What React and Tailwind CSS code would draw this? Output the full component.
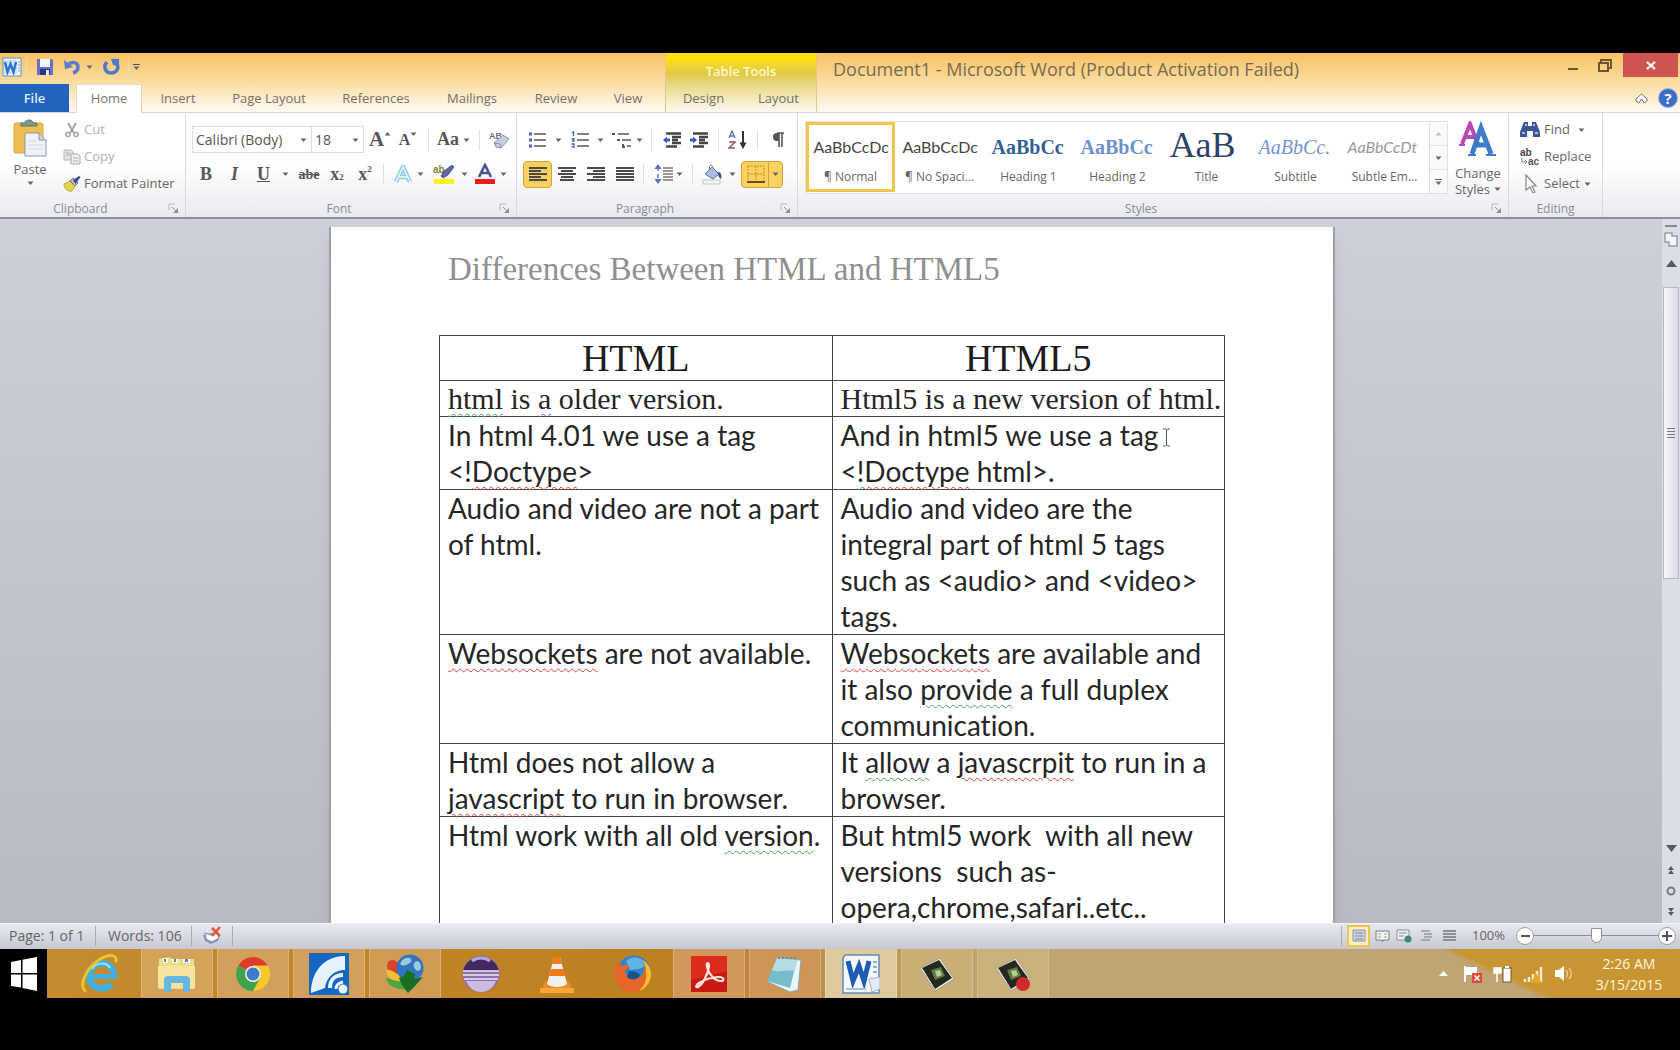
import React from "react";

const ui = "font-['Open_Sans','Noto_Sans',sans-serif]";

function Caret({ className = "" }) {
  return (
    <svg width="7" height="4" viewBox="0 0 7 4" className={`shrink-0 ${className}`} aria-hidden="true">
      <path d="M0.5 0.5h6L3.5 4z" fill="#666" />
    </svg>
  );
}

function Svg({ w = 20, h = 20, box, children }) {
  return (
    <svg width={w} height={h} viewBox={box || `0 0 ${w} ${h}`} fill="none" className="shrink-0" aria-hidden="true">
      {children}
    </svg>
  );
}

function Sep({ className = "mx-1", tone = "bg-[#dfe0e4]" }) {
  return <div className={`h-5 w-px shrink-0 ${tone} ${className}`} />;
}

function Btn({ label, className = "", children }) {
  return (
    <button type="button" aria-label={label} title={label} className={`flex shrink-0 items-center justify-center ${className}`}>
      {children}
    </button>
  );
}

/* ---------- title bar icons ---------- */

const WordBadge = () => (
  <Svg w={20} h={20}>
    <rect x="1" y="1" width="18" height="18" fill="#f3f8fe" stroke="#5a91cc" />
    <rect x="2" y="3" width="13" height="14" fill="#cfe3f7" />
    <path d="M3 5l2.500 10 3-8 3 8L14 5" stroke="#2b74c8" strokeWidth="2.400" />
    <path d="M16 5h2M16 8h2M16 11h2M16 14h2" stroke="#6ea3dc" />
  </Svg>
);
const SaveIcon = () => (
  <Svg w={18} h={18}>
    <path d="M1 1h15l1 1v15H1z" fill="#6a6fc6" />
    <rect x="4" y="1" width="10" height="8" fill="#f4f4fb" />
    <rect x="4" y="11" width="10" height="6" fill="#2c3484" />
    <rect x="10" y="12" width="3" height="5" fill="#e6e8f6" />
  </Svg>
);
const UndoIcon = () => (
  <Svg w={17} h={16}>
    <path d="M3 6c5-4 11-3 11 2 0 3-2 5-5 6" stroke="#5a7ad2" strokeWidth="3.500" />
    <path d="M0 1l1 9 8-2z" fill="#5a7ad2" />
  </Svg>
);
const RedoIcon = () => (
  <Svg w={17} h={16}>
    <path d="M4 3c-4 4-2 11 4 11s9-6 5-10" stroke="#4c78d0" strokeWidth="3.500" />
    <path d="M8 0h8v7l-6-1z" fill="#4c78d0" />
  </Svg>
);

/* ---------- clipboard icons ---------- */

const PasteIcon = () => (
  <Svg w={34} h={38}>
    <rect x="1" y="4" width="29" height="30" rx="2" fill="#f0bd55" stroke="#d9a43e" />
    <path d="M8 7V4h4c0-4 8-4 8 0h4v3z" fill="#7d9c8c" stroke="#5b7a6c" />
    <path d="M12 14h14l7 7v16H12z" fill="#eef1f8" stroke="#8f96ad" />
    <path d="M26 14v7h7" fill="#c9d0e2" stroke="#8f96ad" />
    <path d="M15 22h9M15 26h15M15 30h15" stroke="#d3d9e8" />
  </Svg>
);
const CutIcon = () => (
  <Svg w={16} h={16}>
    <path d="M4 1l6 10M12 1L6 11" stroke="#a4a4aa" strokeWidth="2" />
    <circle cx="4" cy="12.5" r="2" stroke="#a4a4aa" strokeWidth="1.6" />
    <circle cx="12" cy="12.5" r="2" stroke="#a4a4aa" strokeWidth="1.6" />
  </Svg>
);
const CopyIcon = () => (
  <Svg w={18} h={16}>
    <path d="M1 1h7l2 2v8H1z" fill="#e3e3e6" stroke="#b7b7bc" />
    <path d="M8 5h7l2 2v8H8z" fill="#ededf0" stroke="#a9a9b0" />
    <path d="M3 4h4M3 6h4M10 9h5M10 12h5" stroke="#b0b0b8" />
  </Svg>
);
const PainterIcon = () => (
  <Svg w={18} h={17}>
    <path d="M1 9l6-3 5 5-3 5c-4 1-8-2-8-7z" fill="#e3d34e" stroke="#a99b3a" strokeWidth=".8" />
    <path d="M7 6l3-3 5 5-3 3z" fill="#b9bdca" stroke="#6d7080" />
    <path d="M10 5l6-4 1.500 1-5 7z" fill="#3d4a86" />
  </Svg>
);
const Launcher = () => (
  <Svg w={11} h={11}>
    <path d="M1 7V1h6" stroke="#b9bac2" />
    <path d="M4 4l4 4" stroke="#8f9099" />
    <path d="M10 5v5H5z" fill="#8f9099" />
  </Svg>
);

/* ---------- font icons ---------- */

const EraserIcon = () => (
  <Svg w={22} h={20}>
    <text x="1" y="9" fontSize="9" fontWeight="bold" fontFamily="Liberation Sans" fill="#6b6f82">AB</text>
    <path d="M6 13l9-8 6 4-8 9-5-1z" fill="#c9cede" stroke="#8c92a8" />
    <path d="M6 13l6 1 1 4" stroke="#8c92a8" />
  </Svg>
);
const GlowA = () => (
  <Svg w={20} h={20}>
    <path d="M3 18L10 3l7 15M6 13h8" stroke="#8fcde8" strokeWidth="4.500" strokeLinejoin="round" />
    <path d="M3 18L10 3l7 15M6 13h8" stroke="#eefaff" strokeWidth="1.400" />
  </Svg>
);
const HighlightIcon = () => (
  <Svg w={22} h={22}>
    <rect x="1" y="16" width="20" height="5" fill="#f8f31c" />
    <text x="0" y="10" fontSize="10" fontWeight="bold" fontFamily="Liberation Sans" fill="#7c8431">ab</text>
    <path d="M8 13l3-5 8-6 2 2-6 8-5 3z" fill="#5f669b" stroke="#474b70" strokeWidth=".8" />
  </Svg>
);
const FontColorIcon = () => (
  <Svg w={22} h={22}>
    <rect x="1" y="16" width="20" height="5" fill="#ea1c1c" />
    <path d="M5 14L11 2l6 12M7.500 10h7" stroke="#47558f" strokeWidth="2.600" />
  </Svg>
);

/* ---------- paragraph icons ---------- */

const Bullets = () => (
  <Svg w={18} h={17}>
    <path d="M5 3h12M5 9h12M5 15h12" stroke="#555" strokeWidth="1.500" />
    <path d="M0 3h3M0 9h3M0 15h3" stroke="#4a66b0" strokeWidth="3" />
  </Svg>
);
const Numbering = () => (
  <Svg w={18} h={17}>
    <path d="M6 3h12M6 9h12M6 15h12" stroke="#555" strokeWidth="1.500" />
    <path d="M1 2l1.500-1v4M0.500 8h2.500v2H1M0.500 13h2.500v3H.5" stroke="#4a66b0" strokeWidth="1.300" />
  </Svg>
);
const Multilevel = () => (
  <Svg w={20} h={18}>
    <path d="M6 3h11M10 9h9M15 15h4" stroke="#555" strokeWidth="1.500" />
    <path d="M0 3h3M5 9h3M11 13v3h2" stroke="#555" strokeWidth="2" />
  </Svg>
);
const Indent = ({ flip }) => (
  <Svg w={19} h={16}>
    <path d="M3 1.500h15M9 5h9M9 8h6M9 11h9M3 14.500h11" stroke="#444" strokeWidth="2.400" />
    {flip ? <path d="M0 8l4-3.500v2h3v3H4v2z" fill="#4559b8" /> : <path d="M7 8L3 4.500v2H0v3h3v2z" fill="#4559b8" />}
  </Svg>
);
const SortIcon = () => (
  <Svg w={19} h={20}>
    <path d="M1 8l3-7 3 7M2 6h4" stroke="#5573b0" strokeWidth="1.300" />
    <path d="M1 12h6l-6 6h6" stroke="#8b5570" strokeWidth="1.500" />
    <path d="M15 1v13" stroke="#333" strokeWidth="2" />
    <path d="M11.500 12.500h7L15 19z" fill="#333" />
  </Svg>
);
const Pilcrow = () => (
  <Svg w={14} h={16}>
    <path d="M6 1h7M8 1v14M11 1v14" stroke="#555" strokeWidth="1.600" />
    <path d="M8 1H6a4 4 0 000 8h2z" fill="#555" />
  </Svg>
);
const alignPaths = {
  left: "M0 2h18M0 5h12M0 8h18M0 11h12M0 14h18",
  center: "M0 2h18M3 5h12M0 8h18M3 11h12M2 14h14",
  right: "M0 2h18M6 5h12M0 8h18M6 11h12M0 14h18",
  full: "M0 2h18M0 5h18M0 8h18M0 11h18M0 14h18",
};
const Align = ({ kind }) => (
  <Svg w={18} h={16}>
    <path d={alignPaths[kind]} stroke="#4a4a4a" strokeWidth="2" />
  </Svg>
);
const Spacing = () => (
  <Svg w={19} h={20}>
    <path d="M9 4h10M9 7h10M9 10h10M9 13h10M9 16h10" stroke="#777" strokeWidth="1.500" />
    <path d="M4 3v14" stroke="#6e82cc" strokeWidth="1.500" strokeDasharray="4 3" />
    <path d="M4 0l3.500 5h-7zM4 20l3.500-5h-7z" fill="#5a6cc4" />
  </Svg>
);
const Bucket = () => (
  <Svg w={21} h={21}>
    <rect x="1" y="16" width="17" height="4" fill="#f5f5f7" stroke="#c3c5cd" />
    <path d="M3 10l7-7 7 7-6 5z" fill="#aebbdc" stroke="#5c6fa8" />
    <path d="M8 6c-2-5 2-6 3-3" stroke="#5c6fa8" />
    <path d="M16 8c3 0 4 3 3 7-2-1-3-3-3-7z" fill="#38558f" />
  </Svg>
);
const Borders = () => (
  <Svg w={18} h={18}>
    <path d="M1 1h16v16M1 1v16M9 1v16M1 9h16" stroke="#c48a28" strokeDasharray="2 1" />
    <path d="M0 17h18" stroke="#6b4f1c" strokeWidth="2" />
  </Svg>
);

/* ---------- styles / editing icons ---------- */

const ChangeStylesIcon = () => (
  <Svg w={38} h={36}>
    <path d="M3 23L11 3l8 20M6 16h10" stroke="#b848b4" strokeWidth="4" />
    <path d="M0 24h6M15 24h7" stroke="#b848b4" strokeWidth="2" />
    <path d="M13 33L22 7l10 26M16 24h13" stroke="#3e7bc8" strokeWidth="5" />
    <path d="M9 34h8M27 34h10" stroke="#3e7bc8" strokeWidth="2" />
  </Svg>
);
const FindIcon = () => (
  <Svg w={20} h={17}>
    <path d="M4 1h4v4h4V1h4l4 10v5h-7v-6H7v6H0v-5z" fill="#3d5596" />
    <path d="M2 12h3M15 12h3M5 4h2M13 4h2" stroke="#a9bbe6" strokeWidth="2" />
  </Svg>
);
const ReplaceIcon = () => (
  <Svg w={20} h={18}>
    <text x="0" y="8" fontSize="10" fontWeight="bold" fontFamily="Liberation Sans" fill="#444">ab</text>
    <text x="8" y="17" fontSize="10" fontWeight="bold" fontFamily="Liberation Sans" fill="#555">ac</text>
    <path d="M2 10v4h5M5 12l2 2-2 2" stroke="#667fbd" />
  </Svg>
);
const SelectIcon = () => (
  <Svg w={14} h={19}>
    <path d="M2 1l10 11H8l3 6-2 1-3-6-4 3z" fill="#fff" stroke="#888" strokeWidth="1.200" />
  </Svg>
);

/* ---------- ribbon ---------- */

function Group({ name, launcher, className = "", children }) {
  return (
    <section aria-label={name} className={`flex shrink-0 flex-col border-r border-[#d9dae0] ${className}`}>
      <div className="min-h-0 flex-1">{children}</div>
      <div className="flex h-[17px] items-center">
        <span className="flex-1 text-center text-[12px] leading-4 text-[#8b8c94]">{name}</span>
        {launcher && <span className="flex w-6 justify-center"><Launcher /></span>}
      </div>
    </section>
  );
}

function Clipboard() {
  return (
    <Group name="Clipboard" launcher className="w-[186px]">
      <div className="flex">
        <button type="button" className="flex w-[60px] flex-col items-center pt-[6px] text-[13px] text-[#666]">
          <PasteIcon />
          <span className="leading-6">Paste</span>
          <Caret />
        </button>
        <div className="flex flex-col pt-[3px] text-[13px] leading-[27px]">
          <button type="button" className="flex items-center text-[#b0b0b4]">
            <span className="flex w-6 justify-center"><CutIcon /></span>Cut
          </button>
          <button type="button" className="flex items-center text-[#b0b0b4]">
            <span className="flex w-6 justify-center"><CopyIcon /></span>Copy
          </button>
          <button type="button" className="flex items-center whitespace-nowrap text-[#666]">
            <span className="flex w-6 justify-center"><PainterIcon /></span>Format Painter
          </button>
        </div>
      </div>
    </Group>
  );
}

function Combo({ label, value, className }) {
  return (
    <div className={`flex h-[27px] items-center border border-[#dcdde2] bg-white pr-1 ${className}`}>
      <select aria-label={label} className="min-w-0 flex-1 appearance-none bg-transparent pl-[3px] text-[14px] text-[#555] outline-none">
        <option>{value}</option>
      </select>
      <Caret />
    </div>
  );
}

const serif = "font-['Liberation_Serif',serif]";

function FontGroup() {
  return (
    <Group name="Font" launcher className="w-[331px]">
      <div className="flex h-[40px] items-center pt-[13px] pl-[6px]">
        <Combo label="Font name" value="Calibri (Body)" className="w-[120px]" />
        <Combo label="Font size" value="18" className="-ml-px w-[53px]" />
        <Btn label="Grow Font" className={`w-8 text-[21px] font-bold text-[#555] ${serif}`}>A<Caret className="mb-3 rotate-180" /></Btn>
        <Btn label="Shrink Font" className={`w-[24px] text-[16px] font-bold text-[#555] ${serif}`}>A<Caret className="mb-3" /></Btn>
        <Sep className="mr-2 ml-2" />
        <Btn label="Change Case" className={`gap-1 text-[18px] font-bold text-[#555] ${serif}`}>Aa<Caret /></Btn>
        <Sep className="mr-2 ml-[9px]" />
        <Btn label="Clear Formatting"><EraserIcon /></Btn>
      </div>
      <div className={`flex h-[42px] items-center pl-[6px] text-[#555] ${serif}`}>
        <Btn label="Bold" className="w-[28px] text-[18px] font-bold">B</Btn>
        <Btn label="Italic" className="w-[29px] text-[18px] font-bold italic">I</Btn>
        <Btn label="Underline" className="w-[29px] text-[18px] font-bold underline">U</Btn>
        <Caret className="mr-[6px] ml-1" />
        <Btn label="Strikethrough" className="w-[28px] text-[14px] font-bold line-through">abe</Btn>
        <Btn label="Subscript" className="w-[28px] text-[18px] font-bold">x<span className="pt-2 text-[9px]">2</span></Btn>
        <Btn label="Superscript" className="w-[28px] text-[18px] font-bold">x<span className="pb-2 text-[9px]">2</span></Btn>
        <Sep className="mr-[9px] ml-1" />
        <Btn label="Text Effects" className="gap-1"><GlowA /><Caret /></Btn>
        <Btn label="Text Highlight Color" className="ml-[9px] gap-[6px]"><HighlightIcon /><Caret /></Btn>
        <Btn label="Font Color" className="ml-[6px] gap-1"><FontColorIcon /><Caret /></Btn>
      </div>
    </Group>
  );
}

function Paragraph() {
  return (
    <Group name="Paragraph" launcher className="w-[281px]">
      <div className="flex h-[40px] items-center pt-[13px] pl-[12px]">
        <Btn label="Bullets" className="gap-[8px]"><Bullets /><Caret /></Btn>
        <Btn label="Numbering" className="ml-[9px] gap-[8px]"><Numbering /><Caret /></Btn>
        <Btn label="Multilevel List" className="ml-2 gap-1"><Multilevel /><Caret /></Btn>
        <Sep className="mr-2 ml-2" />
        <Btn label="Decrease Indent" className="ml-[3px]"><Indent flip /></Btn>
        <Btn label="Increase Indent" className="ml-2"><Indent /></Btn>
        <Sep className="mx-[9px]" />
        <Btn label="Sort"><SortIcon /></Btn>
        <Sep className="mx-[10px]" />
        <Btn label="Show Formatting Marks" className="ml-[3px]"><Pilcrow /></Btn>
      </div>
      <div className="flex h-[42px] items-center pl-[6px]">
        <Btn label="Align Left" className="h-[27px] w-[29px] rounded-sm border border-[#d3a23c] bg-[#fbd25f]"><Align kind="left" /></Btn>
        <Btn label="Center" className="w-[29px]"><Align kind="center" /></Btn>
        <Btn label="Align Right" className="w-[29px]"><Align kind="right" /></Btn>
        <Btn label="Justify" className="w-[29px]"><Align kind="full" /></Btn>
        <Sep className="mr-[10px] ml-1" />
        <Btn label="Line Spacing" className="gap-[3px]"><Spacing /><Caret /></Btn>
        <Sep className="mx-[9px]" />
        <Btn label="Shading" className="gap-[6px]"><Bucket /><Caret /></Btn>
        <Btn label="Borders" className="ml-[5px] h-[27px] rounded-sm border border-[#d3a23c] bg-[#fbd25f] pl-[5px]">
          <Borders />
          <span className="ml-[3px] flex h-full w-[14px] items-center justify-center border-l border-[#d3a23c]"><Caret /></span>
        </Btn>
      </div>
    </Group>
  );
}

const styleItems = [
  ["AaBbCcDc", "¶ Normal", "text-[16px] text-[#444] font-['Lato',sans-serif]"],
  ["AaBbCcDc", "¶ No Spaci...", "text-[16px] text-[#444] font-['Lato',sans-serif]"],
  ["AaBbCc", "Heading 1", "text-[20px] font-bold text-[#365f91] font-['Liberation_Serif',serif]"],
  ["AaBbCc", "Heading 2", "text-[20px] font-bold text-[#6f90cf] font-['Liberation_Serif',serif]"],
  ["AaB", "Title", "pb-1 text-[36px] leading-[40px] text-[#2c4468] font-['Liberation_Serif',serif]"],
  ["AaBbCc.", "Subtitle", "text-[20px] italic text-[#7396cf] font-['Liberation_Serif',serif]"],
  ["AaBbCcDt", "Subtle Em...", "text-[16px] italic text-[#999] font-['Lato',sans-serif]"],
];

function Styles() {
  return (
    <Group name="Styles" launcher className="w-[711px]">
      <div className="flex pt-2 pl-[7px]">
        <div className="flex h-[73px] border border-[#e4dfe2] bg-white">
          {styleItems.map(([sample, name, cls], i) => (
            <button
              type="button"
              key={name}
              className={`flex h-[70px] w-[89px] flex-col items-center border-[3px] ${i === 0 ? "border-[#efc54e]" : "border-transparent"}`}
            >
              <span className={`flex h-[44px] w-[74px] items-center whitespace-nowrap ${cls}`}>{sample}</span>
              <span className="text-[12px] leading-4 whitespace-nowrap text-[#666]">{name}</span>
            </button>
          ))}
          <div className="flex w-[18px] flex-col border-l border-[#dcdde2] bg-[#fafafc]">
            <Btn label="Row up" className="flex-1 opacity-40"><Caret className="rotate-180" /></Btn>
            <Btn label="Row down" className="flex-1 border-t border-[#e4e4ea]"><Caret /></Btn>
            <Btn label="More styles" className="flex-1 flex-col gap-px border-t border-[#e4e4ea]"><span className="h-px w-[7px] bg-[#666]" /><Caret /></Btn>
          </div>
        </div>
        <button type="button" className="flex w-[60px] flex-col items-center text-[13px] leading-4 text-[#666]">
          <ChangeStylesIcon />
          <span className="mt-2">Change</span>
          <span className="flex items-center gap-1">Styles <Caret /></span>
        </button>
      </div>
    </Group>
  );
}

function Editing() {
  return (
    <Group name="Editing" className="w-[94px]">
      <div className="flex flex-col pt-[3px] pl-[11px] text-[13px] leading-[27px] text-[#666]">
        <button type="button" className="flex items-center"><span className="flex w-[24px]"><FindIcon /></span>Find<Caret className="ml-2" /></button>
        <button type="button" className="flex items-center"><span className="flex w-[24px]"><ReplaceIcon /></span>Replace</button>
        <button type="button" className="flex items-center"><span className="flex w-[24px] pl-1"><SelectIcon /></span>Select<Caret className="ml-1" /></button>
      </div>
    </Group>
  );
}

/* ---------- header ---------- */

const tabs = [
  ["Insert", "w-[72px]"],
  ["Page Layout", "w-[110px]"],
  ["References", "w-[104px]"],
  ["Mailings", "w-[88px]"],
  ["Review", "w-[80px]"],
  ["View", "w-[64px]"],
];

function Header() {
  return (
    <header className="flex h-[60px] shrink-0 border-b border-[#dcd3d2] bg-linear-to-b from-[#f8c264] via-[#fbdda0] to-[#fffaf5] text-[13px] text-[#77706a]">
      <div className="flex w-[665px] shrink-0 flex-col">
        <div className="flex h-[31px] items-center pb-[3px] pl-[2px]">
          <WordBadge />
          <Sep className="mr-[5px] ml-1 opacity-60" />
          <Btn label="Save" className="ml-1"><SaveIcon /></Btn>
          <Btn label="Undo" className="ml-[10px] gap-[5px]"><UndoIcon /><Caret /></Btn>
          <Btn label="Repeat" className="ml-[10px]"><RedoIcon /></Btn>
          <Sep className="mr-1 ml-2 opacity-60" />
          <Btn label="Customize toolbar" className="flex-col gap-px"><span className="h-px w-[7px] bg-[#555]" /><Caret /></Btn>
        </div>
        <nav className="flex flex-1">
          <button type="button" className="mr-[7px] w-[69px] bg-[#2163bd] pt-px font-semibold text-[#dfeaff]">File</button>
          <button type="button" className="-mb-px w-[66px] border-x border-t border-[#e6d6c4] bg-white">Home</button>
          {tabs.map(([t, w]) => (
            <button type="button" key={t} className={`${w} pt-[2px] whitespace-nowrap`}>{t}</button>
          ))}
        </nav>
      </div>
      <div className="flex w-[152px] shrink-0 flex-col border-x border-[#e2c98a] bg-linear-to-b from-[#ffdf0c] from-10% via-[#dfc945] via-35% to-[#fffaf0]">
        <div className="h-[31px] pt-[6px] text-center leading-6 font-semibold text-[#fff8cf]">Table Tools</div>
        <nav className="flex flex-1">
          <button type="button" className="w-[76px] pt-[2px]">Design</button>
          <button type="button" className="w-[76px] pt-[2px]">Layout</button>
        </nav>
      </div>
      <div className="flex min-w-0 flex-1 flex-col">
        <div className="flex h-[31px]">
          <h1 className="min-w-0 flex-1 truncate pl-4 text-[18px] leading-[32px] whitespace-pre text-[#786a52]">Document1 - Microsoft Word (Product Activation Failed)</h1>
          <Btn label="Minimize" className="h-6 w-8"><span className="mt-2 h-[2px] w-[10px] bg-[#6d5730]" /></Btn>
          <Btn label="Restore" className="h-6 w-8">
            <Svg w={14} h={13}>
              <path d="M3 3V1h10v8h-2M1 4h9v8H1z" stroke="#6d5730" strokeWidth="2" />
            </Svg>
          </Btn>
          <Btn label="Close" className="mr-[2px] ml-[2px] h-6 w-[55px] bg-[#cf5551]">
            <Svg w={10} h={9}><path d="M1 1l8 7M9 1L1 8" stroke="#fff" strokeWidth="2.200" /></Svg>
          </Btn>
        </div>
        <div className="flex flex-1 items-center justify-end gap-[10px] pr-[2px]">
          <Btn label="Minimize the ribbon">
            <Svg w={13} h={11}><path d="M1 6l5.500-5L12 6v2L9 10 6.500 6 4 10 1 8z" fill="#fff" stroke="#7d7358" /></Svg>
          </Btn>
          <Btn label="Help" className="h-5 w-5 rounded-full border border-[#9db6e6] bg-[#3d6cc9] text-[15px] leading-none font-bold text-white">?</Btn>
        </div>
      </div>
    </header>
  );
}

/* ---------- document ---------- */

const Red = ({ children }) => <span className="underline decoration-[#d8433c] decoration-wavy decoration-1 underline-offset-4">{children}</span>;
const Green = ({ children }) => <span className="underline decoration-[#4f9f57] decoration-wavy decoration-1 underline-offset-4">{children}</span>;
const Blue = ({ children }) => <span className="underline decoration-[#5a5ae6] decoration-wavy decoration-1 underline-offset-4">{children}</span>;

const cell = "w-1/2 border border-[#444] px-2 align-top whitespace-pre";

const rows = [
  [<>In html 4.01 we use a tag{"\n"}&lt;!<Red>Doctype</Red>&gt;</>, <>And in html5 we use a tag{"\n"}&lt;<Green>!</Green><Red>Doctype</Red> html&gt;.</>],
  ["Audio and video are not a part\nof html.", "Audio and video are the\nintegral part of html 5 tags\nsuch as <audio> and <video>\ntags."],
  [<><Red>Websockets</Red> are not available.</>, <><Red>Websockets</Red> are available and{"\n"}it also <Green>provide</Green> a full duplex{"\n"}communication.</>],
  [<>Html does not allow a{"\n"}<Red>javascript</Red> to run in browser.</>, <>It <Green>allow</Green> a <Red>javascrpit</Red> to run in a{"\n"}browser.</>],
  [<>Html work with all old <Green>version</Green>.</>, "But html5 work  with all new\nversions  such as-\nopera,chrome,safari..etc.."],
];

function Document() {
  return (
    <main className="min-w-0 flex-1 overflow-hidden bg-linear-to-b from-[#cdd0d9] to-[#b8bbc1] pt-2 pl-[2px]">
      <article className="mx-auto h-full w-[1006px] overflow-hidden border-x-2 border-[#9fa1a8] bg-white px-[108px] shadow-lg">
        <h2 className={`pt-[22px] pl-[9px] text-[33px] leading-[40px] whitespace-nowrap text-[#8f8f8f] ${serif}`}>Differences Between HTML and HTML5</h2>
        <div className="relative">
          <table className="mt-[46px] w-full table-fixed border-collapse text-[28px] leading-[36px] text-[#262626] [font-variant-ligatures:none] font-['Lato',sans-serif]">
            <thead>
              <tr className={`text-[38px] leading-[44px] text-[#1c1c1c] ${serif}`}>
                <th className={`${cell} text-center font-normal`}>HTML</th>
                <th className={`${cell} text-center font-normal`}>HTML5</th>
              </tr>
            </thead>
            <tbody>
              <tr className={`text-[30px] leading-[35px] ${serif}`}>
                <td className={cell}><Green>html</Green> is <Blue>a</Blue> older version.</td>
                <td className={cell}>Html5 is a new version of html.</td>
              </tr>
              {rows.map(([a, b], i) => (
                <tr key={i}>
                  <td className={cell}>{a}</td>
                  <td className={cell}>{b}</td>
                </tr>
              ))}
            </tbody>
          </table>
          <svg width="9" height="19" viewBox="0 0 9 19" className="absolute top-[93px] left-[723px]" aria-hidden="true">
            <path d="M1 1h2.500L4.500 2l1-1H8M4.500 2v15M1 18h2.500l1-1 1 1H8" fill="none" stroke="#555" />
          </svg>
        </div>
      </article>
    </main>
  );
}

function ScrollBar() {
  return (
    <aside className="flex w-[18px] shrink-0 flex-col items-center bg-[#dcdee6]">
      <span className="mt-[6px] h-[2px] w-3 bg-[#888]" />
      <Btn label="View ruler" className="mt-1">
        <Svg w={14} h={16}><path d="M1 2h7v3h5v10H5v-4H1z" fill="#f4f5f9" stroke="#9b9da6" strokeWidth="1.500" /></Svg>
      </Btn>
      <Btn label="Scroll up" className="mt-2 h-4"><Svg w={11} h={7}><path d="M0 7h11L5.500 0z" fill="#555a66" /></Svg></Btn>
      <div className="mt-4 flex h-[292px] w-4 flex-col items-center justify-center gap-[2px] border border-[#b7bac4] bg-linear-to-r from-[#f8f8fb] to-[#d9dbe4]">
        <span className="h-px w-2 bg-[#777]" />
        <span className="h-px w-2 bg-[#777]" />
        <span className="h-px w-2 bg-[#777]" />
        <span className="h-px w-2 bg-[#777]" />
      </div>
      <div className="flex-1" />
      <Btn label="Scroll down" className="h-[22px]"><Svg w={11} h={7}><path d="M0 0h11L5.500 7z" fill="#555a66" /></Svg></Btn>
      <Btn label="Previous page" className="h-[21px]"><Svg w={6} h={8}><path d="M0 4l3-4 3 4zM0 8l3-4 3 4z" fill="#555a66" /></Svg></Btn>
      <Btn label="Select browse object" className="h-[21px]"><Svg w={10} h={10}><circle cx="5" cy="5" r="3.500" stroke="#777b86" strokeWidth="2" /></Svg></Btn>
      <Btn label="Next page" className="h-[22px]"><Svg w={6} h={8}><path d="M0 0l3 4 3-4zM0 4l3 4 3-4z" fill="#555a66" /></Svg></Btn>
    </aside>
  );
}

/* ---------- status bar ---------- */

function StatusBar() {
  const line = "bg-[#a9abb5]";
  return (
    <footer className="flex h-[26px] shrink-0 items-center border-t border-[#f2f3f6] bg-linear-to-b from-[#e9eaef] to-[#c6c9d3] pb-[2px] pl-[9px] text-[14px] text-[#666]">
      <span className="w-[86px] whitespace-nowrap">Page: 1 of 1</span>
      <Sep tone={line} className="mr-3" />
      <span className="w-[83px] whitespace-nowrap">Words: 106</span>
      <Sep tone={line} className="mr-[10px]" />
      <Svg w={20} h={19}>
        <path d="M1 9l8-2 9 2-2 6-7 3-6-3z" fill="#7f97c9" />
        <path d="M3 7l6 2 6-3 2 6-7 4-6-3z" fill="#fff" stroke="#6b7a9e" strokeWidth=".8" />
        <path d="M10 2l8 8M18 1l-8 9" stroke="#e0563f" strokeWidth="2.500" />
      </Svg>
      <Sep tone={line} className="ml-[10px]" />
      <div className="flex-1" />
      <Sep tone={line} className="mr-[5px]" />
      <Btn label="Print Layout" className="h-[22px] w-[23px] border-2 border-[#efc54e] bg-[#fdf0c0]">
        <Svg w={14} h={13}><path d="M1 1h12v11H1z" fill="#cfd3de" stroke="#8e90a0" /><path d="M3 4h8M3 7h8M3 10h8" stroke="#8085a0" /></Svg>
      </Btn>
      <Btn label="Full Screen Reading" className="w-6">
        <Svg w={15} h={14}><path d="M1 2h6l.5 1 .5-1h6v9H8l-.5 2-.5-2H1z" fill="#f3f4f4" stroke="#76807c" /><path d="M3 5h3M3 8h3M9 5h3M9 8h3" stroke="#97a09c" /></Svg>
      </Btn>
      <Btn label="Web Layout" className="w-5">
        <Svg w={16} h={14}><path d="M1 1h12v10H1z" fill="#f0f1f6" stroke="#8e90a0" /><path d="M3 4h8M3 7h5" stroke="#8085a0" /><circle cx="12" cy="10" r="3.500" fill="#3f8a6c" /></Svg>
      </Btn>
      <Btn label="Outline" className="w-6">
        <Svg w={13} h={13}><path d="M1 2h9M4 5h8M4 8h8M1 11h9" stroke="#9799a6" strokeWidth="1.500" /></Svg>
      </Btn>
      <Btn label="Draft" className="w-[22px]">
        <Svg w={13} h={13}><path d="M0 2h13M0 5h13M0 8h13M0 11h13" stroke="#8d8f9b" strokeWidth="1.800" /></Svg>
      </Btn>
      <span className="w-[53px] pl-1 text-center text-[13px]">100%</span>
      <Btn label="Zoom out" className="ml-[3px] h-[18px] w-[18px] rounded-full border border-[#9b9da6] bg-white"><span className="h-[2px] w-[9px] bg-[#555]" /></Btn>
      <input
        type="range"
        aria-label="Zoom"
        defaultValue={50}
        className="h-[18px] w-[124px] appearance-none bg-[linear-gradient(#8d8f98,#8d8f98)] bg-[length:100%_1px] bg-center bg-no-repeat [&::-webkit-slider-thumb]:h-[15px] [&::-webkit-slider-thumb]:w-[11px] [&::-webkit-slider-thumb]:appearance-none [&::-webkit-slider-thumb]:rounded-b-full [&::-webkit-slider-thumb]:rounded-t-sm [&::-webkit-slider-thumb]:border [&::-webkit-slider-thumb]:border-[#8d8f98] [&::-webkit-slider-thumb]:bg-white"
      />
      <Btn label="Zoom in" className="mr-1 h-[18px] w-[18px] rounded-full border border-[#9b9da6] bg-white">
        <Svg w={10} h={10}><path d="M5 0v10M0 5h10" stroke="#555" strokeWidth="2" /></Svg>
      </Btn>
    </footer>
  );
}

/* ---------- taskbar icons ---------- */

const IE = () => (
  <Svg w={42} h={42}>
    <path d="M34 24A12.500 12.500 0 1 0 31 31" stroke="#3fb0e3" strokeWidth="6.500" />
    <path d="M12 23.500h25" stroke="#3fb0e3" strokeWidth="5" />
    <path d="M12 16c3-6 14-8 18-1" stroke="#a6dff5" strokeWidth="2" />
    <path d="M5 38C-1 32 6 15 19 7c9-6 18-6 17 1" stroke="#f0c22e" strokeWidth="3" strokeLinecap="round" />
  </Svg>
);
const Explorer = () => (
  <Svg w={40} h={40}>
    <path d="M2 5l10-2 3 2h22v30H2z" fill="#f0dd8c" />
    <path d="M6 4h5v5H6zM15 5h6v4h-6zM26 5h7v4h-7z" fill="#fff" />
    <path d="M7 5h2v3H7zM17 5h2v3h-2z" fill="#4e9b57" />
    <path d="M28 5h3v3h-3z" fill="#3f8fcc" />
    <path d="M1 12h37v22H1z" fill="#f5e59f" />
    <path d="M7 38V26c0-3 2-4 4-4h17c3 0 5 1 5 4v12h-7v-9H14v9z" fill="#69b6e3" />
  </Svg>
);
const Chrome = () => (
  <Svg w={36} h={38} box="0 0 36 36">
    <circle cx="18" cy="18" r="17" fill="#f6c829" />
    <path d="M18 18L3.300 9.500A17 17 0 0132.700 9.500H18z" fill="#dc3b2e" />
    <path d="M18 18l-14.700-8.500A17 17 0 0018 35l7-13z" fill="#3ea34c" />
    <circle cx="18" cy="18" r="8" fill="#f7efe0" />
    <circle cx="18" cy="18" r="6.500" fill="#3d7cc9" />
  </Svg>
);
const Wifi = () => (
  <Svg w={40} h={42}>
    <rect width="40" height="42" fill="#1468c4" />
    <path d="M2 40C2 20 14 3 36 3v14C23 17 17 27 16 35z" fill="#e6f2fd" />
    <path d="M21 35c0-8 5-13 13-13" stroke="#e6f2fd" strokeWidth="4" />
    <path d="M27 36c0-4 2-6 7-7" stroke="#e6f2fd" strokeWidth="3" />
    <circle cx="34" cy="36" r="4.500" fill="#e6f2fd" />
  </Svg>
);
const Idm = () => (
  <Svg w={42} h={40}>
    <path d="M4 8c5-5 12 0 14 10L8 22C4 18 2 13 4 8z" fill="#d9432b" />
    <path d="M2 16c5-1 9 3 14 6l2 6C9 28 3 24 2 16z" fill="#f1bf35" />
    <path d="M2 24c6 1 9 4 16 3l4 8C13 36 3 32 2 24z" fill="#4aa63d" />
    <circle cx="26" cy="14" r="13.500" fill="#3173c4" />
    <path d="M17 8c3-5 8-5 10-3s-2 5-5 6-7 1-5-3zM31 8c3-2 6 1 6 5s-4 5-6 2-2-5 0-7z" fill="#9ccbd6" />
    <path d="M15 24l5-2 3-6 8 4-1 5 9-2-8 9-7 7c-4-5-7-9-9-15z" fill="#17701f" />
  </Svg>
);
const Eclipse = () => (
  <Svg w={38} h={40}>
    <circle cx="19" cy="20" r="18.500" fill="#8b72ae" />
    <path d="M1 17a18.500 18.500 0 0136 0z" fill="#42285f" />
    <path d="M4 27h30c-3 7-8 11-15 11S7 34 4 27z" fill="#cdbce0" />
    <path d="M1 17h36M1 21h36M2 25h34" stroke="#efe8f7" strokeWidth="1.500" />
    <path d="M10 7c5-4 13-4 18 0" stroke="#b8a4d0" strokeWidth="3" />
  </Svg>
);
const Vlc = () => (
  <Svg w={34} h={38}>
    <path d="M5 26h24l4 11H1z" fill="#f08a22" />
    <path d="M14 2h6l7 27c-4 4-16 4-20 0z" fill="#f0f0ef" />
    <path d="M14 2h6l2 7H12zM11 14h13l2 7H9z" fill="#ee7b1a" />
    <path d="M0 33h34v5H0z" fill="#f7a63c" />
  </Svg>
);
const Firefox = () => (
  <Svg w={38} h={40}>
    <circle cx="20" cy="18" r="16.500" fill="#2d86c8" />
    <path d="M12 7c6-6 17-4 21 4l-8 4-9 1z" fill="#5eb5e4" />
    <path d="M3 8c2 1 4 3 5 4 3-2 6-1 8 1l-5 4c1 8 12 10 17 4 3-4 3-8 1-13 7 5 8 14 5 20C29 39 17 41 9 36 0 30-1 18 3 8z" fill="#e8652a" />
    <path d="M29 6c9 6 10 16 5 24-3 4-6 6-9 7 5-5 8-10 7-17 0-6-1-10-3-14z" fill="#f7bd36" />
    <path d="M15 17c4 0 9 1 11 4-2 5-9 6-13 2z" fill="#1d4e8e" />
  </Svg>
);
const Acrobat = () => (
  <Svg w={36} h={36}>
    <rect width="36" height="36" fill="#c81a12" />
    <path d="M0 0h36v15L0 24z" fill="#dd2c1c" />
    <path d="M7 31c5-3 10-13 11-21 0-4-3-4-2 1 2 8 8 14 14 14 4 0 3-4-2-4-7 0-15 3-20 6-3 2-4 5-1 4z" stroke="#fde6df" strokeWidth="2.200" />
  </Svg>
);
const Notepad = () => (
  <Svg w={38} h={38}>
    <path d="M11 3l24 2-3 30-8 2L2 27z" fill="#eaf3f5" stroke="#8aa6ab" />
    <path d="M11 3l20 2-7 28L1 26z" fill="#77bccb" />
    <path d="M11 3l20 2-3 11C18 14 11 18 6 15z" fill="#b5dde4" />
    <path d="M12 3h20" stroke="#6c8f96" strokeWidth="2" strokeDasharray="2 2" />
  </Svg>
);
const WordTask = () => (
  <Svg w={38} h={40}>
    <path d="M3 1h34v38H1V4z" fill="#f4f8fd" stroke="#6389b8" strokeWidth="1.500" />
    <path d="M6 7l5 20 6-15 5 15 5-20" stroke="#1e5cb0" strokeWidth="5" />
    <path d="M31 8h4M31 13h4M31 18h4" stroke="#8baeda" strokeWidth="2" />
    <path d="M4 35h20" stroke="#a9c1e0" strokeWidth="2" />
    <path d="M27 25l11-2v12l-8 3z" fill="#e6ecf6" stroke="#9fb0cc" />
  </Svg>
);
const Camtasia = ({ rec }) => (
  <Svg w={38} h={36}>
    <path d="M2 12L22 2l14 21-19 12z" fill="#efece2" stroke="#a6a08c" />
    <path d="M4 12l17-8 13 18-17 11z" fill="#25281f" />
    <path d="M13 14l10-3 4 9-10 4z" fill="#5d7c43" />
    <path d="M17 15l5-1 2 5-5 2z" fill="#b7cf93" />
    <path d="M5 14l11 18M23 5l11 16" stroke="#d8d6cc" strokeDasharray="2 2" />
    {rec && <circle cx="29" cy="28" r="7" fill="#d12a2a" />}
  </Svg>
);

const apps = [
  ["Internet Explorer", IE, ""],
  ["File Explorer", Explorer, "border-x border-[#dcb277] bg-[#d3a35c]"],
  ["Chrome", Chrome, "border-x border-[#dcb277] bg-[#d1a05c]"],
  ["Wi-Fi", Wifi, "border-x border-[#dcb277] bg-[#d1a05a]"],
  ["Download Manager", Idm, "border-x border-[#dcb277] bg-[#d09c55]"],
  ["Eclipse", Eclipse, ""],
  ["VLC", Vlc, ""],
  ["Firefox", Firefox, ""],
  ["Acrobat", Acrobat, "border-x border-[#dcae78] bg-[#d0985a]"],
  ["Notepad", Notepad, "border-x border-[#dcae78] bg-[#cd9558]"],
  ["Word", WordTask, "border-x border-[#ead9b0] bg-[#dccb9c]"],
  ["Camtasia", Camtasia, "border-x border-[#d6bf8b] bg-[#c9ae75]"],
  ["Camtasia Recorder", () => <Camtasia rec />, "border-x border-[#d6bf8b] bg-[#cbb27c]"],
];

function Taskbar() {
  return (
    <div className="flex h-[49px] shrink-0 items-center bg-linear-to-r from-[#c58c30] from-0% via-[#bd801f] via-40% to-[#c0a473] to-60%">
      <Btn label="Start" className="h-full w-[47px] bg-black">
        <Svg w={26} h={34}>
          <path d="M0 5l10-2v13H0zM11.500 2.700L26 0v16H11.500zM0 17.500h10v13L0 29zM11.500 17.500H26V34l-14.500-3z" fill="#fff" />
        </Svg>
      </Btn>
      <div className="ml-[18px] flex h-full gap-1">
        {apps.map(([name, Icon, cls]) => (
          <Btn key={name} label={name} className={`h-full w-[72px] ${cls}`}><Icon /></Btn>
        ))}
      </div>
      <div className="flex h-full flex-1 items-center justify-end bg-[linear-gradient(26deg,transparent_67%,#c99532_69%)] bg-right">
        <Btn label="Hidden icons" className="w-[30px]"><Svg w={9} h={5}><path d="M0 5h9L4.500 0z" fill="#fff" /></Svg></Btn>
        <Btn label="Action Center" className="w-[30px]">
          <Svg w={20} h={18}><path d="M2 1v16" stroke="#fff" strokeWidth="2" /><path d="M3 2h11v8H3z" fill="#fff" /><rect x="9" y="8" width="10" height="10" fill="#dc4b3e" /><path d="M11.500 10.500l5 5M16.500 10.500l-5 5" stroke="#fff" strokeWidth="1.500" /></Svg>
        </Btn>
        <Btn label="Battery" className="w-[30px]">
          <Svg w={20} h={18}><rect x="10" y="3" width="8" height="14" fill="#fff" stroke="#6b5a3a" /><path d="M12 1h4v2h-4z" fill="#fff" /><path d="M1 3h7v5H1zM4 8v9" fill="#fff" stroke="#fff" strokeWidth="1.500" /></Svg>
        </Btn>
        <Btn label="Network" className="w-[30px]">
          <Svg w={20} h={18}><path d="M2 17v-3M6 17v-5M10 17V9M14 17V6M18 17V2" stroke="#f6ecd4" strokeWidth="2.500" /><path d="M13 8l6 10H8z" fill="#e9a81c" /></Svg>
        </Btn>
        <Btn label="Volume" className="w-[30px]">
          <Svg w={18} h={17}><path d="M1 5h4l5-4v15l-5-4H1z" fill="#fff" /><path d="M12 5c2 2 2 5 0 7M15 3c3 3 3 8 0 11" stroke="#e9d2a0" strokeWidth="1.300" /></Svg>
        </Btn>
        <div className="w-[102px] text-center text-[14px] leading-[21px] text-[#fff5dc]">
          2:26 AM<br />3/15/2015
        </div>
      </div>
    </div>
  );
}

export default function App() {
  return (
    <div className={`flex h-screen flex-col overflow-hidden bg-black pt-[53px] pb-[52px] ${ui}`}>
      <Header />
      <div className="flex h-[106px] shrink-0 overflow-hidden border-b-2 border-[#8f9097] bg-linear-to-b from-white from-50% to-[#e9eaef]">
        <Clipboard />
        <FontGroup />
        <Paragraph />
        <Styles />
        <Editing />
      </div>
      <div className="flex min-h-0 flex-1">
        <Document />
        <ScrollBar />
      </div>
      <StatusBar />
      <Taskbar />
    </div>
  );
}
